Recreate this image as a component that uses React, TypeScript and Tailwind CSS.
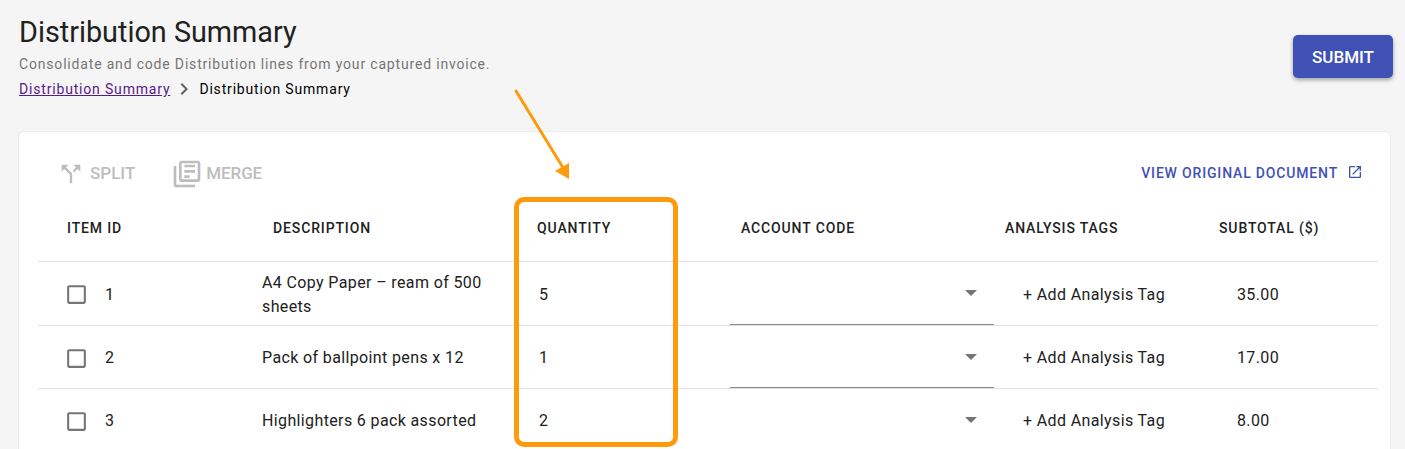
import React from 'react';

const rows = [
  { id: 1, description: 'A4 Copy Paper – ream of 500 sheets', quantity: 5, subtotal: '35.00', height: 'h-[64px]' },
  { id: 2, description: 'Pack of ballpoint pens x 12', quantity: 1, subtotal: '17.00', height: 'h-[63px]' },
  { id: 3, description: 'Highlighters 6 pack assorted', quantity: 2, subtotal: '8.00', height: 'h-[63px]' },
];

const gridCols = 'grid grid-cols-[214px_275px_203px_264px_214px_170px]';

const Icon = ({ d, className }: { d: string; className: string }) => (
  <svg className={className} viewBox="0 0 24 24" fill="currentColor">
    <path d={d} />
  </svg>
);

const Row = ({ row }: { row: (typeof rows)[number] }) => (
  <div className={`${gridCols} ${row.height} items-center border-b border-[#e0e0e0] text-[16px] leading-[24px] tracking-[0.37px] text-[#212121]`}>
    <div className="flex items-center pl-[26px] pt-[2px]">
      <Icon
        className="w-[25px] h-[25px] text-[#757575]"
        d="M19 5v14H5V5h14m0-2H5c-1.1 0-2 .9-2 2v14c0 1.1.9 2 2 2h14c1.1 0 2-.9 2-2V5c0-1.1-.9-2-2-2z"
      />
      <span className="ml-[16px]">{row.id}</span>
    </div>
    <div className="pl-[10px] pr-[10px] pt-[2px]">{row.description}</div>
    <div className="pl-[12px] pt-[2px]">{row.quantity}</div>
    <div className="h-full flex items-center justify-end pr-[17px] border-b border-[#8a8a8a]">
      <span className="w-0 h-0 border-x-[6px] border-x-transparent border-t-[6px] border-t-[#757575]" />
    </div>
    <div className="pl-[29px] pt-[2px]">+ Add Analysis Tag</div>
    <div className="pl-[29px] pt-[2px]">{row.subtotal}</div>
  </div>
);

export default function App() {
  return (
    <div className="relative h-[449px] overflow-hidden bg-[#f5f5f5] font-['Roboto',sans-serif]">
      <div className="flex items-start justify-between pl-[19px] pr-[12px] pt-[13px]">
        <div>
          <h1 className="text-[28.8px] leading-[38px] text-[#212121]">Distribution Summary</h1>
          <p className="text-[14px] leading-[20px] mt-[3px] tracking-[0.82px] text-[#757575]">
            Consolidate and code Distribution lines from your captured invoice.
          </p>
          <div className="flex items-center text-[14px] leading-[20px] mt-[5px] tracking-[0.82px] text-[#212121]">
            <a className="underline text-[#551a8b]" href="#">Distribution Summary</a>
            <Icon
              className="w-[24px] h-[24px] ml-[2px] mr-[3px] -my-[2px] text-[#616161]"
              d="M10 6 8.59 7.41 13.17 12l-4.58 4.59L10 18l6-6z"
            />
            <span className="text-black">Distribution Summary</span>
          </div>
        </div>
        <button className="mt-[22px] w-[100px] h-[43px] pt-[3px] rounded-[5px] bg-[#3f51b5] text-white text-[17px] font-medium shadow-[0_2px_4px_rgba(0,0,0,0.35)]">
          SUBMIT
        </button>
      </div>

      <div className="mt-[33px] ml-[19px] mr-[15px] rounded-[5px] bg-white shadow-[0_0_2px_rgba(0,0,0,0.12)] pl-[19px] pr-[12px] pt-[27px] pb-[40px]">
        <div className="flex items-center h-[30px] pl-[19px] pr-[15px] text-[17px] font-medium text-[#bdbdbd]">
          <Icon
            className="w-[28px] h-[28px]"
            d="M14 4l2.29 2.29-2.88 2.88 1.42 1.42 2.88-2.88L20 10V4zm-4 0H4v6l2.29-2.29 4.71 4.7V20h2v-8.41l-5.29-5.3z"
          />
          <span className="ml-[5px]">SPLIT</span>
          <Icon
            className="ml-[36px] w-[32px] h-[32px]"
            d="M4 6H2v14c0 1.1.9 2 2 2h14v-2H4V6zm16-4H8c-1.1 0-2 .9-2 2v12c0 1.1.9 2 2 2h12c1.1 0 2-.9 2-2V4c0-1.1-.9-2-2-2zm0 14H8V4h12v12zM10 9h8v2h-8zm0 4h4v2h-4zm0-8h8v2h-8z"
          />
          <span className="ml-[3px] tracking-[-0.1px]">MERGE</span>
          <div className="ml-auto flex items-center text-[14px] tracking-[0.83px] text-[#3f51b5] -mt-[1px]">
            <span>VIEW ORIGINAL DOCUMENT</span>
            <Icon
              className="ml-[9px] mb-[3px] w-[16px] h-[16px]"
              d="M19 19H5V5h7V3H5c-1.11 0-2 .9-2 2v14c0 1.1.89 2 2 2h14c1.1 0 2-.9 2-2v-7h-2v7zM14 3v2h3.59l-9.83 9.83 1.41 1.41L19 6.41V10h2V3h-7z"
            />
          </div>
        </div>

        <div className={`${gridCols} mt-[14px] h-[59px] items-center pb-[7px] border-b border-[#e0e0e0] text-[14px] font-medium tracking-[0.87px] text-[#212121]`}>
          <div className="pl-[29px]">ITEM ID</div>
          <div className="pl-[21px]">DESCRIPTION</div>
          <div className="pl-[10px]">QUANTITY</div>
          <div className="pl-[11px]">ACCOUNT CODE</div>
          <div className="pl-[11px]">ANALYSIS TAGS</div>
          <div className="pl-[11px]">SUBTOTAL ($)</div>
        </div>

        {rows.map((row) => (
          <Row key={row.id} row={row} />
        ))}
      </div>

      {/* annotation drawn over the screenshot */}
      <div className="absolute left-[514px] top-[197px] w-[164px] h-[250px] rounded-[10px] border-[5px] border-[#ff9a0d]" />
      <svg className="absolute left-[510px] top-[85px]" width="70" height="100" viewBox="0 0 70 100">
        <line x1="6" y1="6" x2="52" y2="81" stroke="#ff9a0d" strokeWidth="3" strokeLinecap="round" />
        <polygon points="59,94 45,86 59,78" fill="#ff9a0d" />
      </svg>
    </div>
  );
}
